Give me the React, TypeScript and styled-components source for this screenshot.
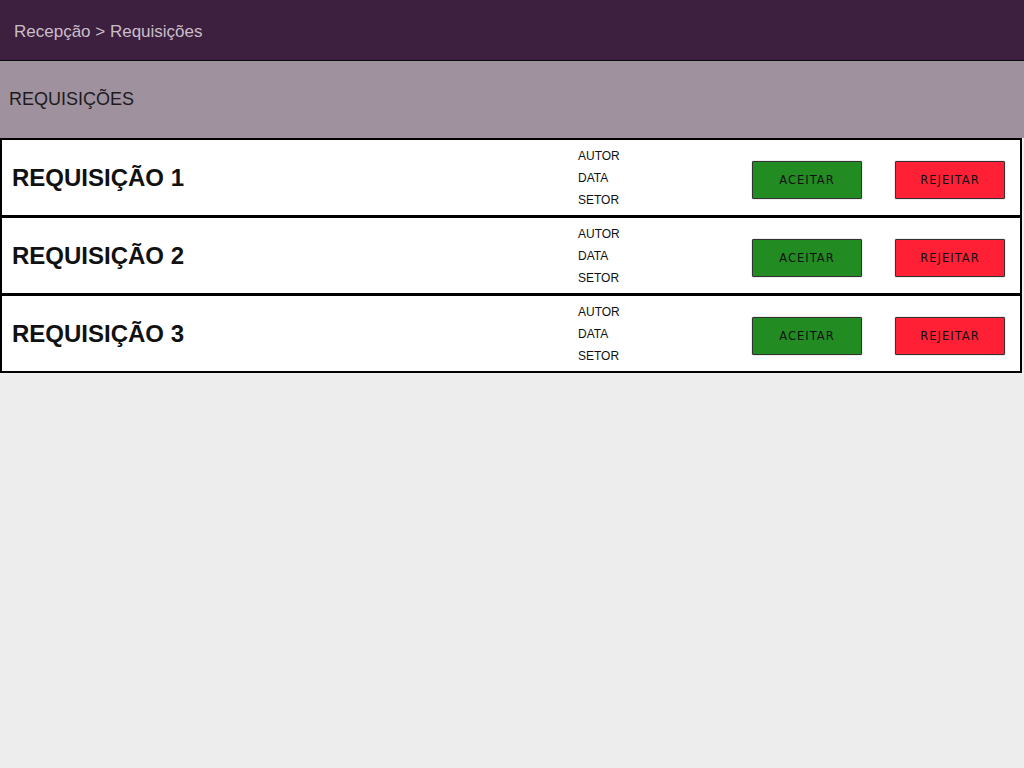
import React from "react";
import styled, { createGlobalStyle } from "styled-components";

const Global = createGlobalStyle`
  html, body { margin: 0; padding: 0; background: #ededed; }
  body { font-family: "Liberation Sans", Arial, sans-serif; }
  * { box-sizing: border-box; }
`;

const Page = styled.div`
  width: 1024px;
  min-height: 768px;
  background: #ededed;
`;

const TopBar = styled.header`
  height: 61px;
  background: #3d1f3f;
  border-bottom: 1px solid #0b0b0b;
  display: flex;
  align-items: center;
  padding-left: 14px;
  padding-top: 3px;
  color: #c9bfc8;
  font-size: 17px;
`;

const SubBar = styled.div`
  height: 77px;
  background: #a0919f;
  display: flex;
  align-items: center;
  padding-left: 9px;
  color: #1c1c1c;
  font-size: 18px;
`;

const List = styled.div`
  display: flex;
  flex-direction: column;
  width: 1022px;
`;

const Card = styled.div`
  height: 79px;
  background: #ffffff;
  border: 2px solid #000;
  margin-top: -1px;
  &:first-child { margin-top: 0; }
  display: grid;
  grid-template-columns: 566px 174px 143px 110px;
  align-items: center;
  padding-left: 10px;
`;

const Title = styled.div`
  font-size: 24px;
  font-weight: bold;
  color: #111;
`;

const Meta = styled.div`
  display: flex;
  flex-direction: column;
  gap: 7px;
  font-size: 12px;
  color: #111;
  line-height: 15px;
  padding-top: 2px;
`;

const Btn = styled.button<{ $bg: string }>`
  width: 110px;
  height: 38px;
  background: ${(p) => p.$bg};
  border: 1px solid #333;
  border-radius: 1px;
  box-shadow: 0 0 0 0.5px rgba(0,0,0,0.15);
  font-family: "DejaVu Sans", sans-serif;
  font-size: 11.5px;
  letter-spacing: 1px;
  color: #111;
  padding: 0;
  margin-top: 5px;
  cursor: pointer;
`;

const items = [1, 2, 3];

export default function App() {
  return (
    <Page>
      <Global />
      <TopBar>Recepção &gt; Requisições</TopBar>
      <SubBar>REQUISIÇÕES</SubBar>
      <List>
        {items.map((n) => (
          <Card key={n}>
            <Title>REQUISIÇÃO {n}</Title>
            <Meta>
              <span>AUTOR</span>
              <span>DATA</span>
              <span>SETOR</span>
            </Meta>
            <Btn $bg="#228b22">ACEITAR</Btn>
            <Btn $bg="#ff2035">REJEITAR</Btn>
          </Card>
        ))}
      </List>
    </Page>
  );
}
